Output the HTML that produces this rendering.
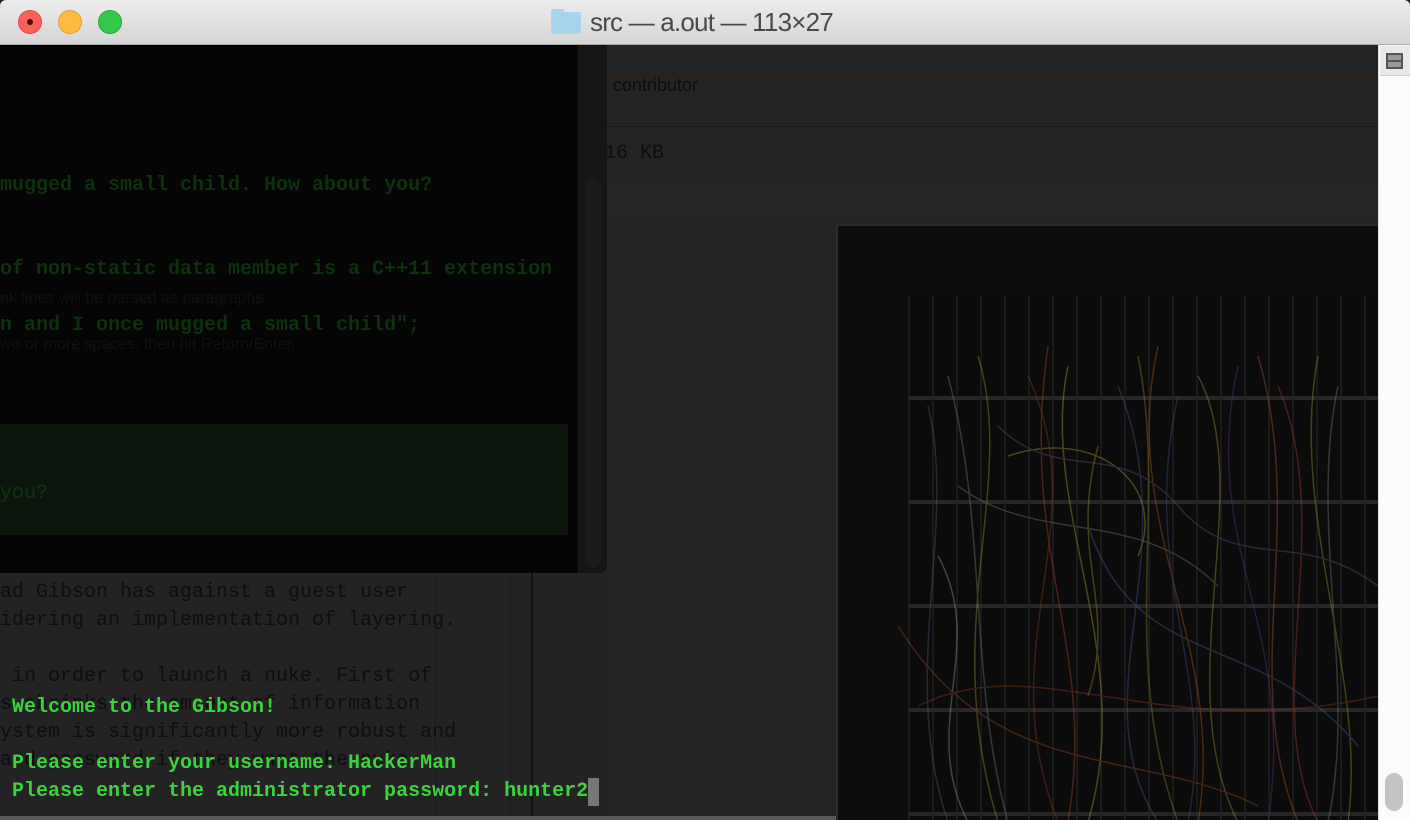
<!DOCTYPE html>
<html><head><meta charset="utf-8"><style>
*{margin:0;padding:0;box-sizing:border-box}
body{width:1410px;height:820px;overflow:hidden;background:#232323;position:relative;font-family:"Liberation Mono",monospace}
.tb{position:absolute;left:0;top:0;width:1410px;height:45px;background:linear-gradient(#ececec,#d6d6d6);border-bottom:1px solid #a8a8a8;border-radius:6px 6px 0 0}
.dot{position:absolute;top:10px;width:24px;height:24px;border-radius:50%}
.title{position:absolute;left:590px;top:7px;font:26px "Liberation Sans",sans-serif;color:#4a4a4a;letter-spacing:-0.8px}
.folder{position:absolute;left:551px;top:12px;width:30px;height:22px;background:#a9d4ee;border-radius:2px}
.folder:before{content:"";position:absolute;left:0;top:-3px;width:13px;height:4px;background:#a9d4ee;border-radius:2px 2px 0 0}
.m{position:absolute;white-space:pre;font-size:20px;line-height:28px}
.s{position:absolute;white-space:pre;font-family:"Liberation Sans",sans-serif}
</style></head><body>
<div style="position:absolute;left:607px;top:45px;width:771px;height:775px;background:#242424"></div>
<div style="position:absolute;left:607px;top:64px;width:771px;height:1px;background:#1d2a33"></div>
<div style="position:absolute;left:607px;top:104px;width:771px;height:1px;background:#1d2a33"></div>
<div style="position:absolute;left:607px;top:126px;width:771px;height:1px;background:#1b1b1b"></div>
<div style="position:absolute;left:607px;top:182px;width:771px;height:40px;background:#262626"></div>
<div class="s" style="left:613px;top:75px;font-size:18px;color:#0e0e0e">contributor</div>
<div class="m" style="left:604px;top:140px;color:#0e0e0e">16 KB</div>
<div style="position:absolute;left:836px;top:224px;width:542px;height:596px;background:#0d0d0d;border-left:2px solid #2a2a2a;border-top:2px solid #2a2a2a;overflow:hidden">
<div style="position:absolute;left:70px;top:70px;width:480px;height:530px;background:repeating-linear-gradient(90deg,#1a1a1a 0 2px,#0b0b0b 2px 24px),#0b0b0b"></div>
<div style="position:absolute;left:70px;top:70px;width:480px;height:530px;background:repeating-linear-gradient(180deg,transparent 0 100px,#262626 100px 104px)"></div>
<svg width="542" height="596" style="position:absolute;left:0;top:0" fill="none" stroke-width="1.5" opacity="0.35">
<path d="M90 180 C120 300 60 450 110 596" stroke="#6a5a90"/>
<path d="M140 130 C180 260 100 400 160 596" stroke="#b0a030"/>
<path d="M190 150 C260 300 150 420 220 596" stroke="#a04020"/>
<path d="M230 140 C200 280 300 430 250 596" stroke="#c0b040"/>
<path d="M280 160 C350 330 240 470 320 596" stroke="#5060a0"/>
<path d="M320 120 C280 300 390 420 360 596" stroke="#c06020"/>
<path d="M360 150 C420 260 330 460 400 596" stroke="#b0a040"/>
<path d="M400 140 C360 320 460 400 430 596" stroke="#703090"/>
<path d="M440 160 C500 300 420 480 480 596" stroke="#c04030"/>
<path d="M480 130 C450 290 530 450 510 596" stroke="#b0a030"/>
<path d="M120 260 C200 320 300 280 380 360" stroke="#888"/>
<path d="M60 400 C160 560 300 520 420 580" stroke="#b05020"/>
<path d="M250 300 C300 450 420 400 520 520" stroke="#4a6ab0"/>
<path d="M100 330 C150 420 80 500 130 596" stroke="#aaa"/>
<path d="M170 230 C260 200 330 260 300 330" stroke="#c0b040"/>
<path d="M110 150 C150 300 130 450 170 596" stroke="#888"/>
<path d="M210 120 C180 330 260 420 230 596" stroke="#c05030"/>
<path d="M300 130 C330 280 280 430 340 596" stroke="#a09030"/>
<path d="M340 170 C300 350 380 450 350 596" stroke="#505090"/>
<path d="M420 130 C470 300 400 450 460 596" stroke="#c06030"/>
<path d="M500 160 C470 300 520 460 490 596" stroke="#888"/>
<path d="M160 200 C220 260 280 210 340 280 C400 350 460 300 540 360" stroke="#6a5a90"/>
<path d="M80 480 C200 420 320 520 540 470" stroke="#a04020"/>
<path d="M260 220 C230 330 280 380 250 470" stroke="#b0a030"/>
</svg>
</div>
<div style="position:absolute;left:1378px;top:45px;width:32px;height:775px;background:#fcfcfc;border-left:1px solid #ddd"></div>
<div style="position:absolute;left:1380px;top:46px;width:30px;height:30px;background:#e8e8e8;border-bottom:1px solid #ccc"></div>
<div style="position:absolute;left:1386px;top:53px;width:17px;height:16px;border:2px solid #555;background:#999"></div>
<div style="position:absolute;left:1386px;top:60px;width:17px;height:2px;background:#555"></div>
<div style="position:absolute;left:1385px;top:773px;width:18px;height:38px;background:#c4c4c4;border-radius:9px"></div>
<div style="position:absolute;left:435px;top:573px;width:1px;height:247px;background:#1c1c1c"></div>
<div style="position:absolute;left:510px;top:573px;width:1px;height:247px;background:#1c1c1c"></div>
<div style="position:absolute;left:531px;top:573px;width:2px;height:247px;background:#111"></div>
<div class="m" style="left:0;top:579px;color:#0e0e0e">ad Gibson has against a guest user
idering an implementation of layering.

 in order to launch a nuke. First of
s shrinks the amount of information
ystem is significantly more robust and
ard password if they want the nuke</div>
<div style="position:absolute;left:0;top:45px;width:578px;height:528px;background:#050505"></div>
<div style="position:absolute;left:578px;top:45px;width:29px;height:528px;background:#151515;border-radius:0 0 8px 0"></div>
<div style="position:absolute;left:585px;top:178px;width:16px;height:390px;border-radius:8px;background:#1b1b1b"></div>
<div style="position:absolute;left:0;top:424px;width:568px;height:111px;background:#0c150c"></div>
<div class="m" style="left:0;top:172px;color:#0d300d;font-weight:bold">mugged a small child. How about you?</div>
<div class="m" style="left:0;top:256px;color:#0c320c;font-weight:bold">of non-static data member is a C++11 extension</div>
<div class="m" style="left:0;top:312px;color:#0d300d;font-weight:bold">n and I once mugged a small child";</div>
<div class="m" style="left:0;top:480px;color:#0f350f">you?</div>
<div class="s" style="left:0;top:290px;font-size:16px;color:#111">nk lines will be parsed as paragraphs.</div>
<div class="s" style="left:0;top:336px;font-size:16px;color:#111">wo or more spaces, then hit Return/Enter.</div>
<div class="m" style="left:12px;top:694px;color:#3bd33b;font-weight:bold">Welcome to the Gibson!</div>
<div class="m" style="left:12px;top:750px;color:#3bd33b;font-weight:bold">Please enter your username: HackerMan
Please enter the administrator password: hunter2</div>
<div style="position:absolute;left:588px;top:778px;width:11px;height:28px;background:#777"></div>
<div style="position:absolute;left:0;top:816px;width:836px;height:4px;background:#5a5a5a"></div>
<div class="tb"></div>
<div class="dot" style="left:18px;background:#fc605c;border:1px solid #de4a46"></div>
<div style="position:absolute;left:27px;top:19px;width:6px;height:6px;border-radius:50%;background:#4d0000"></div>
<div class="dot" style="left:58px;background:#fdbc40;border:1px solid #dea034"></div>
<div class="dot" style="left:98px;background:#34c84a;border:1px solid #27aa35"></div>
<div class="folder"></div>
<div class="title">src — a.out — 113×27</div>
</body></html>
